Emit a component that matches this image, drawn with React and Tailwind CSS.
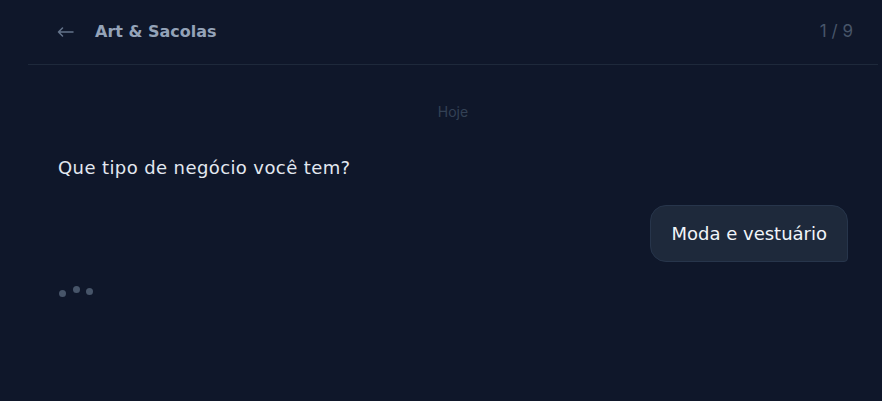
export default function App() {
  return (
    <div className="min-h-[401px] bg-[#0f172a] pl-[28px] pr-[4px] font-['Inter',sans-serif]">
      {/* header */}
      <div className="flex h-[65px] items-center justify-between border-b border-[#1e293b] pl-[29px] pr-[25px]">
        <div className="flex items-center gap-[21px]">
          <svg width="17" height="10" viewBox="0 0 17 10" fill="none" stroke="#64748b" strokeWidth="1.5" strokeLinecap="round" strokeLinejoin="round">
            <path d="M16 5H1.5M5.5 1L1.5 5l4 4" />
          </svg>
          <span className="font-['DejaVu_Sans',sans-serif] text-[16px] font-bold text-[#94a3b8]">Art &amp; Sacolas</span>
        </div>
        <span className="text-[17px] text-[#475569]">1 / 9</span>
      </div>

      {/* messages */}
      <div className="flex flex-col px-[30px] font-['DejaVu_Sans',sans-serif]">
        <div className="mt-[37px] text-center font-['Inter',sans-serif] text-[14px] leading-[20px] text-[#334155]">Hoje</div>

        <p className="mt-[34px] text-[18px] leading-[24px] tracking-[0.4px] text-[#e2e8f0]">Que tipo de negócio você tem?</p>

        <div className="mt-[25px] flex justify-end">
          <div className="rounded-[16px] rounded-br-[4px] border border-[#27354b] bg-[#1e293b] px-[20px] py-[16px] text-[18px] leading-[23px] text-[#f1f5f9]">
            Moda e vestuário
          </div>
        </div>

        <div className="mt-[24px] flex items-start gap-[6.5px] pl-[1px]">
          <span className="mt-[4px] h-[7px] w-[7px] rounded-full bg-[#475569]" />
          <span className="h-[7px] w-[7px] rounded-full bg-[#475569]" />
          <span className="mt-[2px] h-[7px] w-[7px] rounded-full bg-[#475569]" />
        </div>
      </div>
    </div>
  );
}
